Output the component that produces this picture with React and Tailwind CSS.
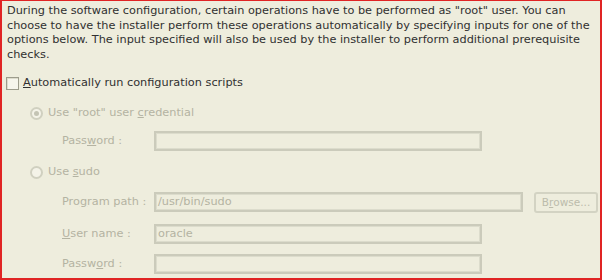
import React from 'react';

const font = "font-['DejaVu_Sans',sans-serif]";

const Field = ({ label, value, wide, className = '' }) => (
  <div className={`flex items-center h-[20px] ${className}`}>
    <span className="w-[92px] text-[#b4b3a2]">{label}</span>
    <div
      className={`h-[20px] border-2 border-[#cbcbbb] shadow-[inset_0_0_0_1px_#dcdccc] px-[2px] flex items-center text-[#b4b3a2] ${
        wide ? 'w-[369px]' : 'w-[328px]'
      }`}
    >
      {value}
    </div>
    {wide && (
      <div className="ml-[11px] w-[64px] h-[21px] rounded-[3px] border-2 border-[#d3d3c3] flex items-center justify-center text-[#bcbcac] text-[10.5px]">
        B<u>r</u>owse...
      </div>
    )}
  </div>
);

const Radio = ({ checked, children, className = '' }) => (
  <div className={`flex items-center h-[14px] ${className}`}>
    <span className="w-[13px] h-[13px] rounded-full border-2 border-[#d0d0c0] bg-[#f4f3e8] flex items-center justify-center">
      {checked && <span className="w-[5px] h-[5px] rounded-full bg-[#c4c4b4]" />}
    </span>
    <span className="ml-[5px] text-[#b4b3a2]">{children}</span>
  </div>
);

export default function App() {
  return (
    <div
      className={`w-[602px] h-[280px] bg-[#eeeddd] border-[#e02424] border-l-2 border-r-2 border-b-2 border-t-[1px] text-[11.3px] leading-[14px] ${font} overflow-hidden`}
    >
      <p className="pl-[5px] pt-[3px] leading-[14.5px] text-[#303030] whitespace-nowrap">
        During the software configuration, certain operations have to be performed as "root" user. You can
        <br />
        choose to have the installer perform these operations automatically by specifying inputs for one of the
        <br />
        options below. The input specified will also be used by the installer to perform additional prerequisite
        <br />
        checks.
      </p>

      <div className="flex items-center h-[14px] pl-[4px] mt-[14px]">
        <span className="w-[13px] h-[13px] border border-[#9d9c8c] bg-[#f6f5ec] shadow-[inset_1px_1px_0_#dddccc]" />
        <span className="ml-[4px] text-[#303030]">
          <u>A</u>utomatically run configuration scripts
        </span>
      </div>

      <div className="pl-[28px]">
        <Radio checked className="mt-[16px]">
          Use "root" user <u>c</u>redential
        </Radio>
        <div className="pl-[32px]">
          <Field label={<>Pass<u>w</u>ord :</>} className="mt-[11px]" />
        </div>

        <Radio className="mt-[14px]">
          Use <u>s</u>udo
        </Radio>
        <div className="pl-[32px]">
          <Field label={<>Pro<u>g</u>ram path :</>} value="/usr/bin/sudo" wide className="mt-[13px]" />
          <Field label={<><u>U</u>ser name :</>} value="oracle" className="mt-[12px]" />
          <Field label={<>Passw<u>o</u>rd :</>} className="mt-[10px]" />
        </div>
      </div>
    </div>
  );
}
